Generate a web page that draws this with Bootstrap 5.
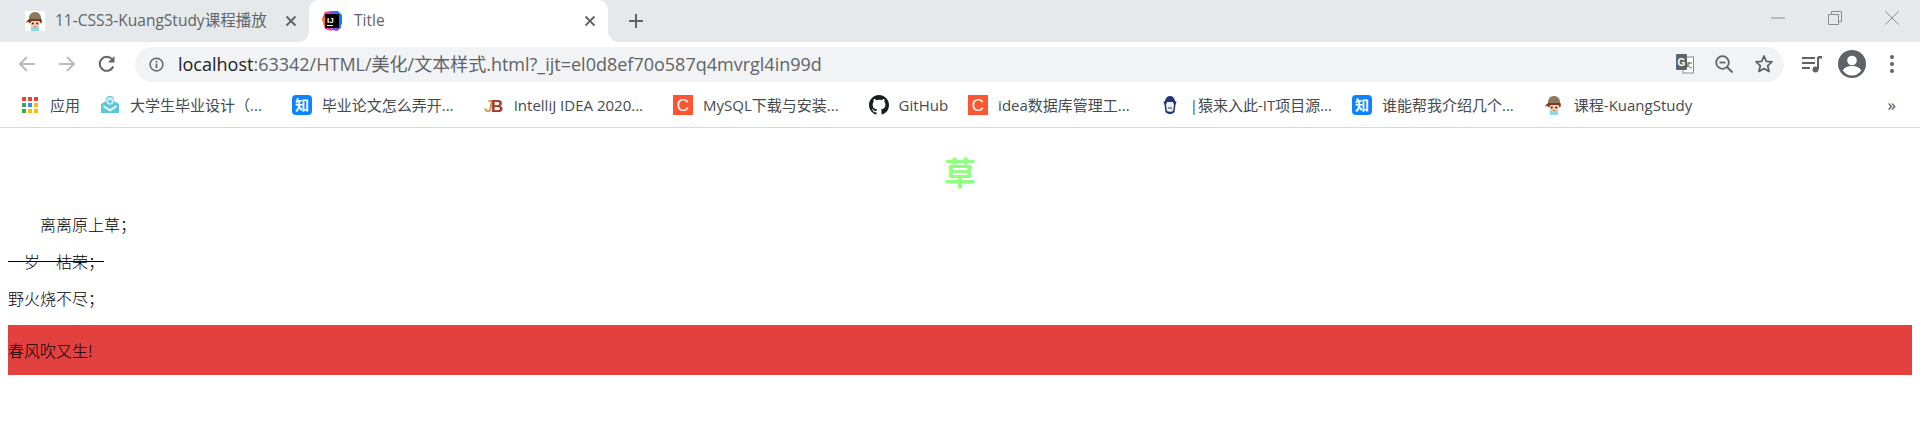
<!DOCTYPE html>
<html lang="zh-CN">
<head>
  <meta charset="UTF-8">
  <title>Title</title>
  <link href="https://cdn.jsdelivr.net/npm/bootstrap@5.3.0/dist/css/bootstrap.min.css" rel="stylesheet">
  <style>
    html, body {
      background: #fff;
      overflow: hidden;
    }

    body {
      font-family: "Open Sans", "Noto Sans CJK SC", sans-serif;
      color: #000;
    }

    /* browser chrome */
    .tab-strip {
      height: 42px;
      background: #e6e9ec;
      color: #5f6368;
      font-size: 15.5px;
    }

    .tab-item {
      height: 42px;
      padding: 0 12px 0 25px;
      white-space: nowrap;
    }

    .tab-item svg.fav {
      width: 20px;
      height: 20px;
      margin-right: 10px;
      flex: none;
    }

    .tab-first {
      width: 309px;
    }

    .tab-active {
      background: #fff;
      border-radius: 10px 10px 0 0;
      position: relative;
      padding-left: 13px;
      width: 299px;
    }

    .tab-active svg.fav {
      margin-right: 12px;
    }

    .tab-active::before,
    .tab-active::after {
      content: "";
      position: absolute;
      bottom: 0;
      width: 10px;
      height: 10px;
    }

    .tab-active::before {
      left: -10px;
      background: radial-gradient(circle at 0 0, #e6e9ec 9.5px, #fff 10px);
    }

    .tab-active::after {
      right: -10px;
      background: radial-gradient(circle at 100% 0, #e6e9ec 9.5px, #fff 10px);
    }

    .tab-close {
      margin-left: auto;
      flex: none;
    }

    .tab-new {
      margin-left: 20px;
    }

    .win-ctrls {
      margin-left: auto;
      height: 42px;
      padding-top: 11px;
    }

    .win-ctrls span {
      display: block;
      width: 57px;
      text-align: center;
      line-height: 0;
    }

    .tool-bar {
      height: 43px;
      background: #fff;
      padding: 1px 0 0 18px;
    }

    .tool-btn {
      width: 40px;
      flex: none;
      line-height: 0;
    }

    .omni-box {
      width: 1649px;
      height: 35px;
      margin-left: -3px;
      background: #f1f3f4;
      border-radius: 18px;
      padding: 0 10px 0 14px;
      font-size: 18px;
      white-space: nowrap;
      color: #5f6368;
    }

    .omni-box b {
      font-weight: 400;
      color: #202124;
    }

    .omni-url {
      margin-left: 14px;
    }

    .omni-icons {
      margin-left: auto;
      gap: 20px;
      line-height: 0;
    }

    .tool-right {
      margin-left: 8px;
    }

    .mark-bar {
      height: 43px;
      background: #fff;
      border-bottom: 1px solid #d8d9de;
      padding: 0 0 2px 20px;
      font-size: 15px;
      color: #444a4f;
      white-space: nowrap;
    }

    .mark-item svg {
      width: 20px;
      height: 20px;
      flex: none;
      margin-right: 10px;
    }

    .mark-item {
      margin-right: 30px;
    }

    .mark-item-plain {
      margin-right: 20px;
    }

    .mark-more {
      margin-left: auto;
      margin-right: 24px;
      font-size: 17px;
    }

    /* page content */
    .poem-page {
      padding: 0 8px;
      font-family: "Noto Sans CJK SC", sans-serif;
      font-size: 16px;
      font-weight: 300;
      line-height: 21px;
    }

    .poem-title {
      margin: 21px 0;
      color: #90ff80;
      font-size: 32px;
      font-weight: 700;
      line-height: 44px;
      text-align: center;
      font-family: "Noto Sans CJK SC", sans-serif;
    }

    .poem-line {
      margin: 0 0 16px;
    }

    .poem-indent {
      text-indent: 2em;
    }

    .poem-strike {
      text-decoration: line-through;
    }

    .poem-band {
      height: 50px;
      line-height: 50px;
      background: #e34040;
    }
  </style>
</head>
<body>
  <svg width="0" height="0" class="d-block">
    <defs>
      <symbol id="kuang" viewBox="0 0 20 20">
        <path d="M6 15h8v5H6z" fill="#8ed8ea"/>
        <ellipse cx="10" cy="11.500" rx="5.500" ry="5" fill="#f6d0b4"/>
        <path d="M4 9c-.500-5 2-8 6-8s6.500 3 6 8z" fill="#8b7a5c"/>
        <path d="M4 8h12.500l.5 3-1.500 1.500-1-2.500H6.500l-1.500 2.500L3.500 11l-3 .5z" fill="#84371f"/>
        <circle cx="7.800" cy="12.500" r="1" fill="#2a1a14"/>
        <circle cx="12.200" cy="12.500" r="1" fill="#2a1a14"/>
        <path d="M8.500 15h3l-1.500 1.200z" fill="#c6452f"/>
      </symbol>
      <symbol id="zhi" viewBox="0 0 20 20">
        <rect width="20" height="20" rx="4" fill="#0a84ff"/>
        <text x="10" y="15" text-anchor="middle" font-size="14" font-weight="700" fill="#fff" font-family="Noto Sans CJK SC">知</text>
      </symbol>
      <symbol id="csdn" viewBox="0 0 20 20">
        <rect width="20" height="20" fill="#fc5531"/>
        <text x="10" y="16" text-anchor="middle" font-size="17" fill="#fff" font-family="Liberation Sans">C</text>
      </symbol>
    </defs>
  </svg>

  <div class="tab-strip d-flex">
    <div class="tab-item tab-first d-flex align-items-center">
      <svg class="fav"><rect width="20" height="20" fill="#fff"/><use href="#kuang"/></svg>
      <span>11-CSS3-KuangStudy课程播放</span>
      <svg class="tab-close" width="12" height="12" viewBox="0 0 12 12"><path d="M1.500 1.500l9 9M10.500 1.500l-9 9" stroke="#5f6368" stroke-width="1.800"/></svg>
    </div>
    <div class="tab-item tab-active d-flex align-items-center">
      <svg class="fav" viewBox="0 0 20 20">
        <path d="M0 8l3-7 7-1-2 10 2 10-7-2z" fill="#f0397c"/>
        <path d="M0 8l3-2 2 8-3 1z" fill="#fc801d"/>
        <path d="M8 0h7l5 5-1 12-4 3-5-1z" fill="#7356f0"/>
        <path d="M13 0h3l4 4v9l-4 2z" fill="#087cfa"/>
        <rect x="3" y="3" width="14" height="14" fill="#000"/>
        <text x="5" y="11.500" font-size="8" font-weight="700" fill="#fff" font-family="Liberation Sans">IJ</text>
        <path d="M5 14h6v1H5z" fill="#fff"/>
      </svg>
      <span>Title</span>
      <svg class="tab-close" width="12" height="12" viewBox="0 0 12 12"><path d="M1.500 1.500l9 9M10.500 1.500l-9 9" stroke="#5f6368" stroke-width="1.800"/></svg>
    </div>
    <div class="tab-new d-flex align-items-center">
      <svg width="16" height="16" viewBox="0 0 16 16"><path d="M8 1v14M1 8h14" stroke="#5f6368" stroke-width="2"/></svg>
    </div>
    <div class="win-ctrls d-flex">
      <span><svg width="14" height="14" viewBox="0 0 14 14"><path d="M0 7h14" stroke="#8a8d90"/></svg></span>
      <span><svg width="14" height="14" viewBox="0 0 14 14"><path d="M.5 3.500h10v10H.5zM3.500 3.500v-3h10v10h-3" fill="none" stroke="#8a8d90"/></svg></span>
      <span><svg width="14" height="14" viewBox="0 0 14 14"><path d="M.5.500l13 13M13.500.500l-13 13" stroke="#8a8d90"/></svg></span>
    </div>
  </div>

  <div class="tool-bar d-flex align-items-center">
    <div class="tool-btn"><svg width="18" height="18" viewBox="0 0 18 18"><path d="M17 9H2M9 2L2 9l7 7" fill="none" stroke="#babcbe" stroke-width="2"/></svg></div>
    <div class="tool-btn"><svg width="18" height="18" viewBox="0 0 18 18"><path d="M1 9h15M9 2l7 7-7 7" fill="none" stroke="#babcbe" stroke-width="2"/></svg></div>
    <div class="tool-btn"><svg width="18" height="18" viewBox="0 0 18 18"><path d="M15.200 11.500A7 7 0 1 1 14 4.200" fill="none" stroke="#5f6368" stroke-width="2"/><path d="M16.500 1v6.500H10z" fill="#5f6368"/></svg></div>
    <div class="omni-box d-flex align-items-center">
      <svg width="15" height="15" viewBox="0 0 16 16" class="flex-none"><circle cx="8" cy="8" r="6.800" fill="none" stroke="#5f6368" stroke-width="1.600"/><path d="M7.100 7h1.800v5H7.100zM7.100 4h1.800v1.800H7.100z" fill="#5f6368"/></svg>
      <span class="omni-url"><b>localhost</b>:63342/HTML/美化/文本样式.html?_ijt=el0d8ef70o587q4mvrgl4in99d</span>
      <div class="omni-icons d-flex align-items-center">
        <svg width="18" height="20" viewBox="0 0 18 20"><rect x="7" y="3" width="10.500" height="16" fill="#fff" stroke="#8a8d90"/><rect x="0" y="0" width="11" height="16" rx="1" fill="#5f6368"/><text x="5.500" y="12" text-anchor="middle" font-size="10" font-weight="700" fill="#fff" font-family="Liberation Sans">G</text><path d="M10 9h6M13 8v1c0 2-1.500 4-3 5M11 10c.5 2 3 4 5 4" fill="none" stroke="#5f6368"/></svg>
        <svg width="20" height="20" viewBox="0 0 20 20"><circle cx="8.500" cy="8.500" r="6.300" fill="none" stroke="#5f6368" stroke-width="1.800"/><path d="M13 13l5.500 5.500" stroke="#5f6368" stroke-width="2"/><path d="M5.500 8.500h6" stroke="#5f6368" stroke-width="1.800"/></svg>
        <svg width="20" height="20" viewBox="0 0 20 20"><path d="M10 2l2.300 5.400 5.700.5-4.300 3.800 1.300 5.700-5-3-5 3 1.300-5.700L2 7.900l5.700-.5z" fill="none" stroke="#5f6368" stroke-width="1.800" stroke-linejoin="round"/></svg>
      </div>
    </div>
    <div class="tool-right d-flex align-items-center">
      <div class="tool-btn text-center"><svg width="20" height="20" viewBox="0 0 20 20"><path d="M0 4h13M0 9h13M0 14h8" stroke="#5f6368" stroke-width="1.800"/><path d="M16 3v12" stroke="#5f6368" stroke-width="2"/><path d="M16 2h4v2.500h-4z" fill="#5f6368"/><circle cx="13.500" cy="15.500" r="3" fill="#5f6368"/></svg></div>
      <div class="tool-btn text-center"><svg width="28" height="28" viewBox="0 0 28 28"><circle cx="14" cy="14" r="14" fill="#5f6368"/><circle cx="14" cy="10.500" r="4.800" fill="#fff"/><path d="M4.800 20.500c2-3.500 5.500-4.500 9.200-4.500s7.200 1 9.200 4.500c-2 3-5.500 5-9.200 5s-7.200-2-9.200-5z" fill="#fff"/></svg></div>
      <div class="tool-btn text-center"><svg width="4" height="18" viewBox="0 0 4 18"><circle cx="2" cy="2" r="2" fill="#5f6368"/><circle cx="2" cy="9" r="2" fill="#5f6368"/><circle cx="2" cy="16" r="2" fill="#5f6368"/></svg></div>
    </div>
  </div>

  <div class="mark-bar d-flex align-items-center">
    <div class="mark-item mark-item-plain d-flex align-items-center">
      <svg viewBox="0 0 20 20"><g><rect x="2" y="2" width="4" height="4" fill="#ea4335"/><rect x="8" y="2" width="4" height="4" fill="#ea4335"/><rect x="14" y="2" width="4" height="4" fill="#ea4335"/><rect x="2" y="8" width="4" height="4" fill="#34a853"/><rect x="8" y="8" width="4" height="4" fill="#4285f4"/><rect x="14" y="8" width="4" height="4" fill="#fbbc05"/><rect x="2" y="14" width="4" height="4" fill="#34a853"/><rect x="8" y="14" width="4" height="4" fill="#fbbc05"/><rect x="14" y="14" width="4" height="4" fill="#fbbc05"/></g></svg>
      <span>应用</span>
    </div>
    <div class="mark-item d-flex align-items-center">
      <svg viewBox="0 0 20 20"><path d="M1 9l5-3v-1a4 4 0 0 1 8 0v1l5 3v9H1z" fill="#5cc6d6"/><circle cx="10" cy="6" r="3.800" fill="#cfeef2"/><circle cx="10" cy="6.500" r="1.800" fill="#6cc4d4"/><path d="M3.500 10l6.500 4 6.500-4v2.500L10 16.500l-6.500-4z" fill="#e8f8fa"/></svg>
      <span>大学生毕业设计（...</span>
    </div>
    <div class="mark-item d-flex align-items-center">
      <svg viewBox="0 0 20 20"><use href="#zhi"/></svg>
      <span>毕业论文怎么弄开...</span>
    </div>
    <div class="mark-item d-flex align-items-center">
      <svg viewBox="0 0 20 20"><text x="0" y="16.500" font-size="16" font-weight="700" font-style="italic" fill="#c9a46a" font-family="Liberation Sans">J</text><text x="7" y="16.500" font-size="17" font-weight="700" fill="#a5362c" font-family="Liberation Sans">B</text></svg>
      <span>IntelliJ IDEA 2020...</span>
    </div>
    <div class="mark-item d-flex align-items-center">
      <svg viewBox="0 0 20 20"><use href="#csdn"/></svg>
      <span>MySQL下载与安装...</span>
    </div>
    <div class="mark-item mark-item-plain d-flex align-items-center">
      <svg viewBox="0 0 16 16"><path fill="#1b1f23" d="M8 0C3.580 0 0 3.580 0 8c0 3.540 2.290 6.530 5.470 7.590.4.070.55-.17.55-.38 0-.19-.01-.82-.01-1.490-2.010.37-2.530-.49-2.690-.94-.09-.23-.48-.94-.82-1.130-.28-.15-.68-.52-.01-.53.63-.01 1.080.58 1.230.82.720 1.210 1.870.870 2.330.660.070-.520.280-.870.510-1.070-1.780-.2-3.640-.89-3.640-3.950 0-.870.310-1.590.820-2.150-.080-.2-.360-1.020.080-2.120 0 0 .670-.210 2.200.820.640-.180 1.320-.270 2-.270s1.360.090 2 .270c1.530-1.040 2.200-.820 2.200-.820.440 1.100.160 1.920.080 2.120.510.560.820 1.270.820 2.150 0 3.070-1.870 3.750-3.650 3.950.290.250.540.730.540 1.480 0 1.070-.010 1.930-.010 2.200 0 .210.150.460.550.380A8.010 8.010 0 0 0 16 8c0-4.420-3.580-8-8-8z"/></svg>
      <span>GitHub</span>
    </div>
    <div class="mark-item d-flex align-items-center">
      <svg viewBox="0 0 20 20"><use href="#csdn"/></svg>
      <span>idea数据库管理工...</span>
    </div>
    <div class="mark-item mark-item-plain d-flex align-items-center">
      <svg viewBox="0 0 20 20"><path d="M10 1c3 0 4.500 2 5 5l1.500 1-1 3-1 7c-1 1.500-3 2-4.500 2s-3.500-.5-4.500-2l-1-7-1-3L5 6c.5-3 2-5 5-5z" fill="#26357a"/><path d="M7 7h6l1 3-1 6c-1 1-5 1-6 0l-1-6z" fill="#eef0f8"/><path d="M8 13h4" stroke="#26357a"/></svg>
      <span>|猿来入此-IT项目源...</span>
    </div>
    <div class="mark-item d-flex align-items-center">
      <svg viewBox="0 0 20 20"><use href="#zhi"/></svg>
      <span>谁能帮我介绍几个...</span>
    </div>
    <div class="mark-item d-flex align-items-center">
      <svg viewBox="0 0 20 20"><use href="#kuang"/></svg>
      <span>课程-KuangStudy</span>
    </div>
    <span class="mark-more">»</span>
  </div>

  <div class="poem-page">
    <h1 class="poem-title">草</h1>
    <p class="poem-line poem-indent">离离原上草；</p>
    <p class="poem-line poem-strike">一岁一枯荣；</p>
    <p class="poem-line">野火烧不尽；</p>
    <p class="poem-line poem-band">春风吹又生!</p>
  </div>

  <script src="https://cdn.jsdelivr.net/npm/bootstrap@5.3.0/dist/js/bootstrap.bundle.min.js"></script>
</body>
</html>
